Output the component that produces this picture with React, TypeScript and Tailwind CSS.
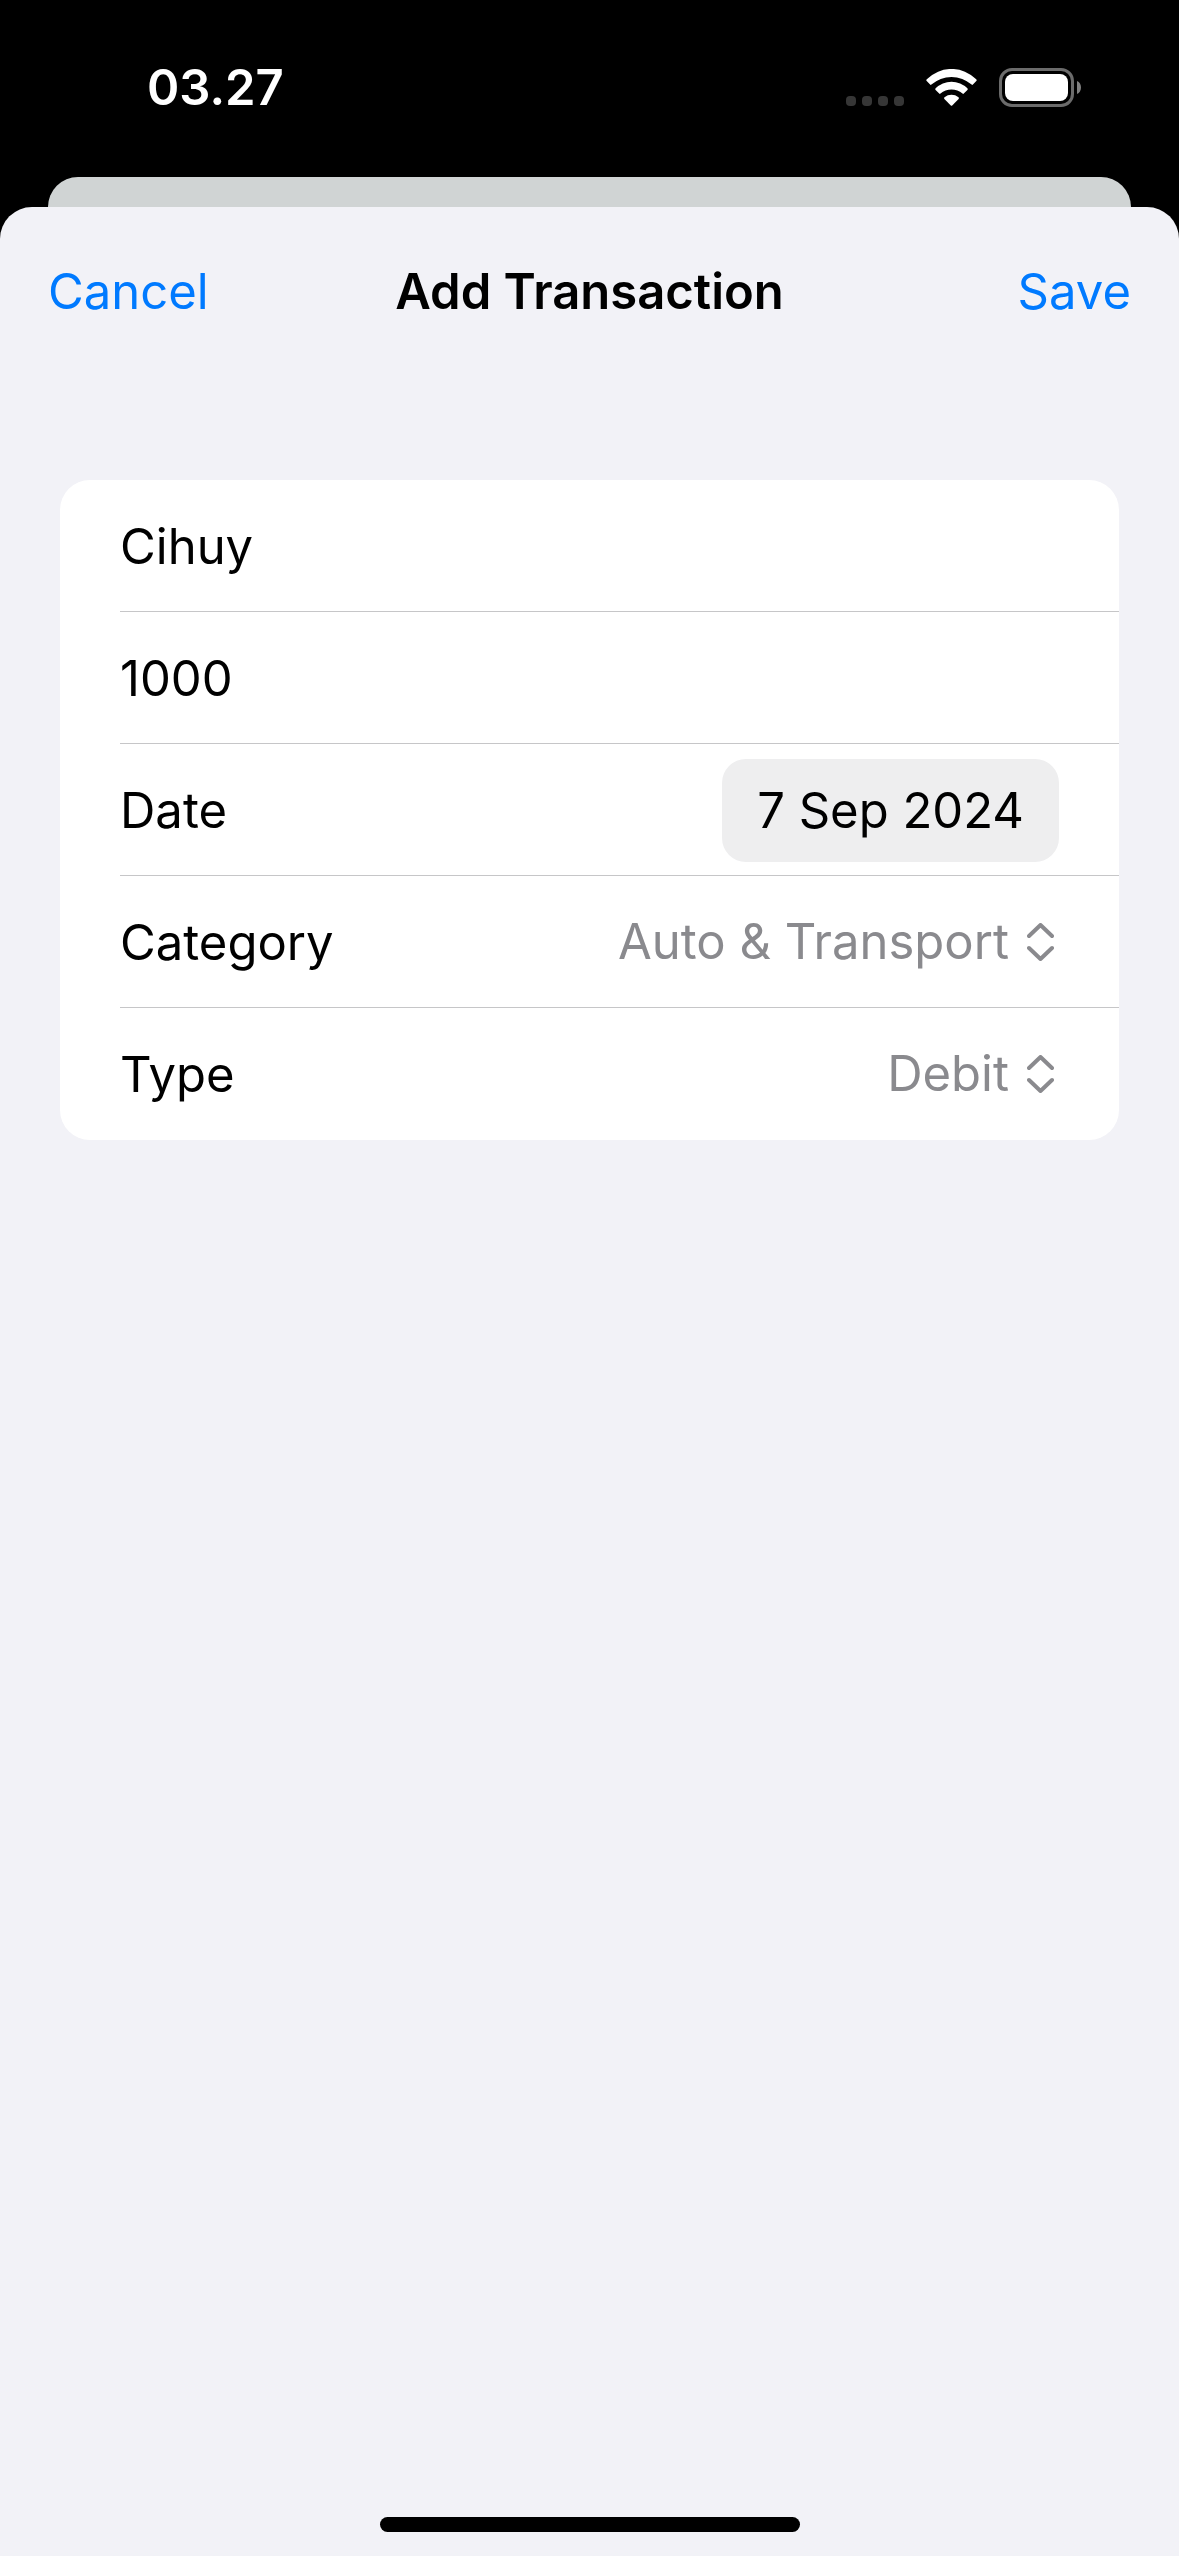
import { useState } from "react";
import type { ReactNode } from "react";

function WifiIcon() {
  return (
    <svg viewBox="0 0 51 37" className="h-[37px] w-[51px] fill-white" aria-hidden="true">
      <path d="M0.8 10.3A34.6 34.6 0 0 1 50.2 10.3Q51.1 11.2 50.3 12.1L46.9 15.6Q46.3 16.2 45.6 15.6A30.2 30.2 0 0 0 5.4 15.6Q4.7 16.2 4.1 15.6L0.7 12.1Q-0.1 11.2 0.8 10.3Z" />
      <path d="M9.6 19.3A22.5 22.5 0 0 1 41.4 19.3Q42.2 20.2 41.4 21L37.8 24.6Q37.2 25.2 36.5 24.6A16.6 16.6 0 0 0 14.5 24.6Q13.8 25.2 13.2 24.6L9.6 21Q8.8 20.2 9.6 19.3Z" />
      <path d="M18.5 28.2A11.5 11.5 0 0 1 32.5 28.2Q33.4 29 32.6 29.9L26.2 36.4Q25.5 37 24.8 36.4L18.4 29.9Q17.6 29 18.5 28.2Z" />
    </svg>
  );
}

function BatteryIcon() {
  return (
    <svg viewBox="0 0 82 39" className="h-[39px] w-[82px]" aria-hidden="true">
      <rect x="1.5" y="1.5" width="72" height="36" rx="11.5" fill="none" stroke="#6b6b6b" strokeWidth="3" />
      <rect x="6" y="6" width="63" height="27" rx="8" fill="#fff" />
      <path d="M78 13C80.6 14.2 82 16.6 82 19.5S80.6 24.8 78 26Z" fill="#808080" />
    </svg>
  );
}

function UpDownIcon() {
  return (
    <svg
      viewBox="0 0 27 38"
      className="mr-[5px] h-[38px] w-[27px] shrink-0"
      fill="none"
      stroke="#8a8a8e"
      strokeWidth="4"
      strokeLinecap="round"
      strokeLinejoin="round"
      aria-hidden="true"
    >
      <path d="M2 13L13.5 2L25 13M2 25L13.5 36L25 25" />
    </svg>
  );
}

function StatusBar() {
  return (
    <div className="flex h-[177px] shrink-0 items-start justify-between pt-[57px] pr-[98px] pl-[147px]">
      <time className="leading-[62px] font-semibold text-white">03.27</time>
      <div className="flex items-end gap-[22px] pt-[11px]">
        <div className="flex gap-1.5 pb-px">
          <span className="size-2.5 rounded-[4px] bg-[#363636]" />
          <span className="size-2.5 rounded-[4px] bg-[#363636]" />
          <span className="size-2.5 rounded-[4px] bg-[#363636]" />
          <span className="size-2.5 rounded-[4px] bg-[#363636]" />
        </div>
        <div className="pb-px">
          <WifiIcon />
        </div>
        <BatteryIcon />
      </div>
    </div>
  );
}

function Row({ children, last = false }: { children: ReactNode; last?: boolean }) {
  return (
    <div
      className={
        last
          ? "flex h-[132px] items-center justify-between pt-0.5 pr-[60px]"
          : "flex h-[132px] items-center justify-between border-b border-[#c6c6c8] pt-0.5 pr-[60px]"
      }
    >
      {children}
    </div>
  );
}

function PickerRow({
  id,
  label,
  options,
  last,
}: {
  id: string;
  label: string;
  options: string[];
  last?: boolean;
}) {
  const [value, setValue] = useState(options[0]);
  return (
    <Row last={last}>
      <label htmlFor={id}>{label}</label>
      <div className="flex flex-1 items-center gap-[18px] pb-0.5">
        <select
          id={id}
          value={value}
          onChange={(e) => setValue(e.target.value)}
          className="min-w-0 flex-1 appearance-none bg-transparent text-right text-[#8a8a8e] outline-none [text-align-last:right]"
        >
          {options.map((o) => (
            <option key={o}>{o}</option>
          ))}
        </select>
        <UpDownIcon />
      </div>
    </Row>
  );
}

export default function App() {
  const [name, setName] = useState("Cihuy");
  const [amount, setAmount] = useState("1000");
  return (
    <div className="flex min-h-screen flex-col bg-black font-[Inter,sans-serif] text-[49px] leading-[62px] text-black">
      <StatusBar />
      <div className="mx-12 h-[30px] shrink-0 rounded-t-[30px] bg-[#d0d4d4]" />
      <main className="flex flex-1 flex-col rounded-t-[32px] bg-[#f2f2f7]">
        <header className="grid h-[170px] grid-cols-[1fr_auto_1fr] items-center px-12">
          <button type="button" className="justify-self-start text-[#007aff]">
            Cancel
          </button>
          <h1 className="font-semibold">Add Transaction</h1>
          <button type="button" className="justify-self-end text-[#007aff]">
            Save
          </button>
        </header>
        <form className="mx-[60px] mt-[103px] rounded-[30px] bg-white pl-[60px]">
          <Row>
            <input
              aria-label="Name"
              value={name}
              onChange={(e) => setName(e.target.value)}
              className="min-w-0 flex-1 bg-transparent outline-none"
            />
          </Row>
          <Row>
            <input
              aria-label="Amount"
              inputMode="decimal"
              value={amount}
              onChange={(e) => setAmount(e.target.value)}
              className="min-w-0 flex-1 bg-transparent outline-none"
            />
          </Row>
          <Row>
            <label htmlFor="date">Date</label>
            <button id="date" type="button" className="h-[103px] rounded-3xl bg-[#eeeeef] px-[35px]">
              7 Sep 2024
            </button>
          </Row>
          <PickerRow id="category" label="Category" options={["Auto & Transport", "Bills & Utilities", "Shopping"]} />
          <PickerRow id="type" label="Type" options={["Debit", "Credit"]} last />
        </form>
        <div className="mx-auto mt-auto mb-6 h-[15px] w-[420px] rounded-full bg-black" />
      </main>
    </div>
  );
}
